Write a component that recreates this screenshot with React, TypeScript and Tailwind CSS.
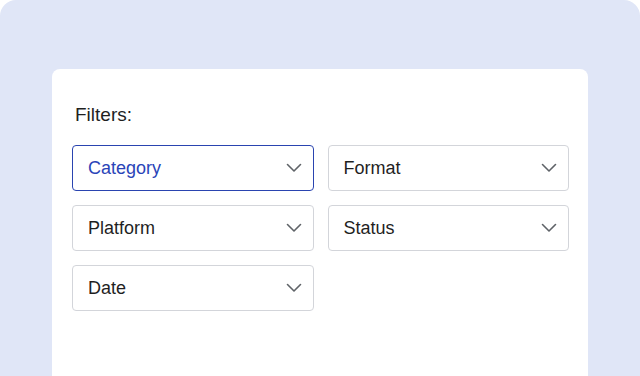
import { useState } from "react"

const Chevron = () => (
    <svg width="16" height="10" viewBox="0 0 16 10" fill="none" className="shrink-0">
        <path d="M1.5 1.5L8 8L14.5 1.5" stroke="#5f6368" strokeWidth="1.6" strokeLinecap="round" strokeLinejoin="round" />
    </svg>
)

const Select = ({ label, active }: { label: string; active?: boolean }) => (
    <button
        className={`${active ? "border-[#2a44b0] text-[#2a44b8]" : "border-[#d3d5da] text-[#1f1f1f]"} flex items-center justify-between h-[46px] border rounded-[4px] bg-white pl-[15px] pr-[11px] text-[18px] text-left`}
    >
        <span>{label}</span>
        <Chevron />
    </button>
)

export default function App() {
    const [filters] = useState(["Category", "Format", "Platform", "Status", "Date"])

    return (
        <div className="w-full h-[376px] bg-white overflow-hidden" style={{ fontFamily: '"Liberation Sans", Arial, sans-serif' }}>
            <div className="h-full bg-[#e0e6f7] rounded-t-[16px] pt-[69px] px-[52px]">
                <div className="h-full bg-white rounded-t-[8px] px-5 pt-[34px]">
                    <p className="text-[19px] leading-6 text-[#1f1f1f] pl-[3px]">Filters:</p>
                    <div className="grid grid-cols-2 gap-x-[14px] gap-y-[14px] mt-[18px] w-[497px]">
                        {filters.map((f, i) => (
                            <Select key={f} label={f} active={i === 0} />
                        ))}
                    </div>
                </div>
            </div>
        </div>
    )
}
